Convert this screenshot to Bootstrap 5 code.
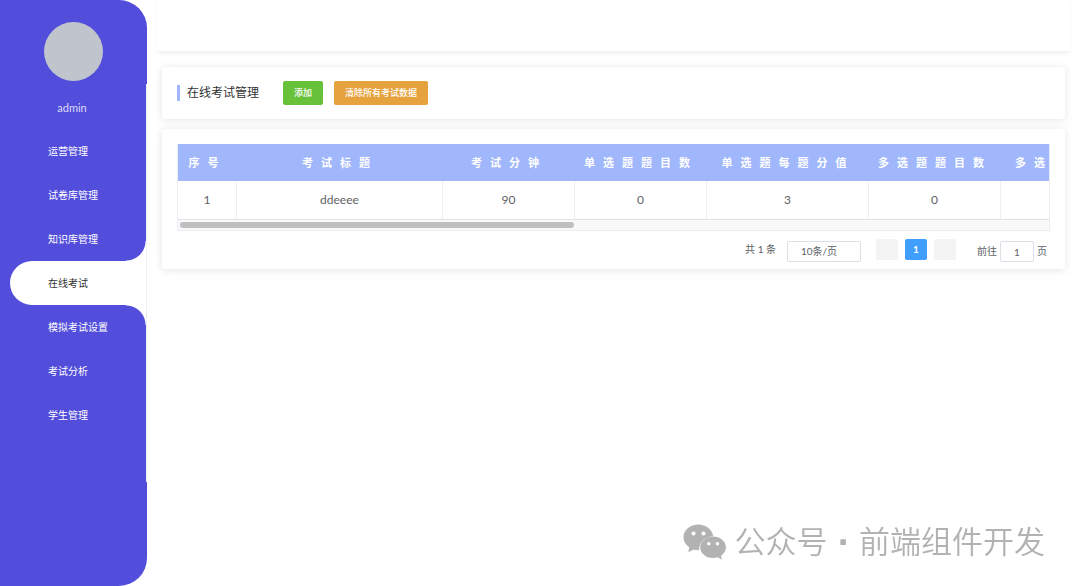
<!DOCTYPE html>
<html lang="zh-CN">
<head>
<meta charset="utf-8">
<meta name="viewport" content="width=device-width, initial-scale=1">
<title>在线考试管理</title>
<link href="https://cdn.jsdelivr.net/npm/bootstrap@5.3.0/dist/css/bootstrap.min.css" rel="stylesheet">
<style>
  :root { --brand: #524ddb; --line: #ebeef5; }
  body { font-family: Lato, "Noto Sans CJK SC", sans-serif; font-size: 12px; line-height: 16px; color: #606266; background: #fff; }

  .side { width: 147px; background: var(--brand); border-radius: 0 28px 28px 0; color: #fff; }
  .side-top { height: 84px; padding-top: 22px; }
  .avatar { width: 59px; height: 59px; background: #c0c4cc; }
  .user-name { font-size: 11px; color: #dddcf8; margin-bottom: 13px; padding-right: 2px; }
  .side-menu { height: 398px; border-right: 1px solid #eceef8; padding-top: 16px; }
  .side-menu a { display: block; height: 44px; line-height: 44px; padding-left: 38px; margin-left: 10px; font-size: 10px; color: #fff; text-decoration: none; }
  .side-menu a.current { position: relative; background: #fff; color: #303133; border-radius: 22px 0 0 22px; }
  .side-menu a.current::before, .side-menu a.current::after { content: ""; position: absolute; right: 0; width: 20px; height: 20px; }
  .side-menu a.current::before { bottom: 100%; background: radial-gradient(circle at 0 0, transparent 19px, #fff 20px); }
  .side-menu a.current::after { top: 100%; background: radial-gradient(circle at 0 100%, transparent 19px, #fff 20px); }

  .content { padding: 0 10px; }
  .top-strip { height: 51px; background: #fff; box-shadow: 0 3px 4px -1px rgba(0, 21, 41, .08); }
  .panels { padding: 16px 5px; gap: 10px; }
  .panel { background: #fff; border-radius: 3px; box-shadow: 0 1px 8px rgba(0, 0, 0, .11); padding: 15px; }
  .panel-head { padding: 14px 15px; }
  .panel-title { font-size: 12px; line-height: 16px; font-weight: 400; color: #303133; border-left: 3px solid #a0b7fb; padding-left: 7px; margin: 0 24px 0 0; }
  .act-list { gap: 11px; }
  .act { border: 0; border-radius: 2px; height: 24px; padding: 0 11px; font-size: 9px; line-height: 24px; color: #fff; font-weight: 500; }
  .act-add { background: #67c23a; }
  .act-clear { background: #e6a23c; }

  .grid-box { border: 1px solid var(--line); border-top: 0; overflow: hidden; }
  .exam-grid { width: 984px; table-layout: fixed; border-collapse: separate; border-spacing: 0; text-align: center; }
  .exam-grid th { height: 37px; padding: 0; background: #a0b7fb; color: #fff; font-size: 11px; font-weight: 700; letter-spacing: 8px; white-space: nowrap; }
  .exam-grid th.edge { text-align: left; padding-left: 14px; }
  .exam-grid td { height: 39px; padding: 0; border-right: 1px solid var(--line); border-bottom: 1px solid #dfe2e8; }
  .scroll-track { height: 10px; background: #f9f9f9; padding: 2px; }
  .scroll-thumb { height: 6px; border-radius: 3px; background: #bfbfbf; }

  .pager { font-size: 10px; line-height: 24px; padding: 8px 3px 0 0; height: 38px; margin-bottom: -15px; }
  .pager .total { margin-right: 11px; line-height: 20px; }
  .pager select, .pager input { height: 21px; border: 1px solid #dcdfe6; border-radius: 2px; background: #fff; color: #606266; font-size: 10px; line-height: 19px; padding: 0; text-align: center; appearance: none; margin-top: 2px; }
  .pager select { width: 74px; margin-right: 15px; padding: 0 0 0 13px; text-align: left; }
  .pager input { width: 34px; margin-left: 3px; margin-right: 3px; }
  .pg-list { gap: 7px; }
  .pg { width: 22px; height: 21px; padding: 0; border: 0; border-radius: 2px; background: #f4f4f5; font-size: 10px; line-height: 21px; }
  .pg.on { background: #409eff; color: #fff; font-weight: 700; }
  .jump { margin-left: 21px; }

  .watermark { position: fixed; right: 35px; bottom: 24px; color: #b2b2b2; font-size: 31px; line-height: 40px; font-family: "DejaVu Sans", "Noto Sans CJK SC", sans-serif; font-weight: 350; }
</style>
<script src="https://cdn.jsdelivr.net/npm/bootstrap@5.3.0/dist/js/bootstrap.bundle.min.js"></script>
</head>
<body>
<div class="d-flex min-vh-100">
  <aside class="side flex-shrink-0">
    <div class="side-top d-flex flex-column align-items-center">
      <div class="avatar rounded-circle flex-shrink-0"></div>
    </div>
    <div class="side-menu">
      <div class="user-name text-center">admin</div>
      <nav>
        <a href="#">运营管理</a>
        <a href="#">试卷库管理</a>
        <a href="#">知识库管理</a>
        <a href="#" class="current" aria-current="page">在线考试</a>
        <a href="#">模拟考试设置</a>
        <a href="#">考试分析</a>
        <a href="#">学生管理</a>
      </nav>
    </div>
  </aside>

  <main class="content flex-grow-1 overflow-hidden">
    <header class="top-strip"></header>
    <div class="panels d-flex flex-column">
      <section class="panel panel-head d-flex align-items-center">
        <h1 class="panel-title">在线考试管理</h1>
        <div class="act-list d-flex">
          <button type="button" class="act act-add">添加</button>
          <button type="button" class="act act-clear">清除所有考试数据</button>
        </div>
      </section>

      <section class="panel">
        <div class="grid-box">
          <table class="exam-grid">
            <colgroup><col style="width:59px"><col style="width:206px"><col style="width:132px"><col style="width:132px"><col style="width:162px"><col style="width:132px"><col style="width:161px"></colgroup>
            <thead>
              <tr><th>序号</th><th>考试标题</th><th>考试分钟</th><th>单选题题目数</th><th>单选题每题分值</th><th>多选题题目数</th><th class="edge">多选</th></tr>
            </thead>
            <tbody>
              <tr><td>1</td><td>ddeeee</td><td>90</td><td>0</td><td>3</td><td>0</td><td></td></tr>
            </tbody>
          </table>
          <div class="scroll-track"><div class="scroll-thumb" style="width:45.5%"></div></div>
        </div>
        <div class="pager d-flex justify-content-end align-items-start">
          <span class="total">共 1 条</span>
          <select aria-label="每页条数"><option>10条/页</option></select>
          <div class="pg-list d-flex">
            <button type="button" class="pg" aria-label="上一页"></button>
            <button type="button" class="pg on">1</button>
            <button type="button" class="pg" aria-label="下一页"></button>
          </div>
          <label class="jump" for="page-no">前往</label>
          <input id="page-no" type="text" value="1">
          <span>页</span>
        </div>
      </section>
    </div>
  </main>
</div>

<div class="watermark d-flex align-items-center gap-2">
  <svg width="44" height="36" viewBox="0 0 44 36" aria-hidden="true">
    <path fill="#b2b2b2" d="M15.500.5C7.200.5.500 6 .5 13.200c0 4.200 2.200 7.600 5.800 10l-1 5 5.200-2.600c1.600.4 3.300.6 5 .6h.6c-.3-8 5.500-13.800 14.200-14C29 5.500 23 .5 15.500.5z"/>
    <path fill="#b2b2b2" d="M30 12.600c-7.200 0-12.800 4.800-12.800 10.600S22.800 34 30 34c1.600 0 3.200-.2 4.600-.7l4.400 2.400-1-4c3.100-2 4.900-5 4.900-8.500 0-5.800-5.800-10.600-12.900-10.600z"/>
    <circle cx="10.500" cy="9.500" r="2" fill="#fff"/><circle cx="20.500" cy="9.500" r="2" fill="#fff"/>
    <circle cx="25.800" cy="19.800" r="1.700" fill="#fff"/><circle cx="34.500" cy="19.800" r="1.700" fill="#fff"/>
  </svg>
  <span>公众号 <b>·</b> 前端组件开发</span>
</div>
</body>
</html>
